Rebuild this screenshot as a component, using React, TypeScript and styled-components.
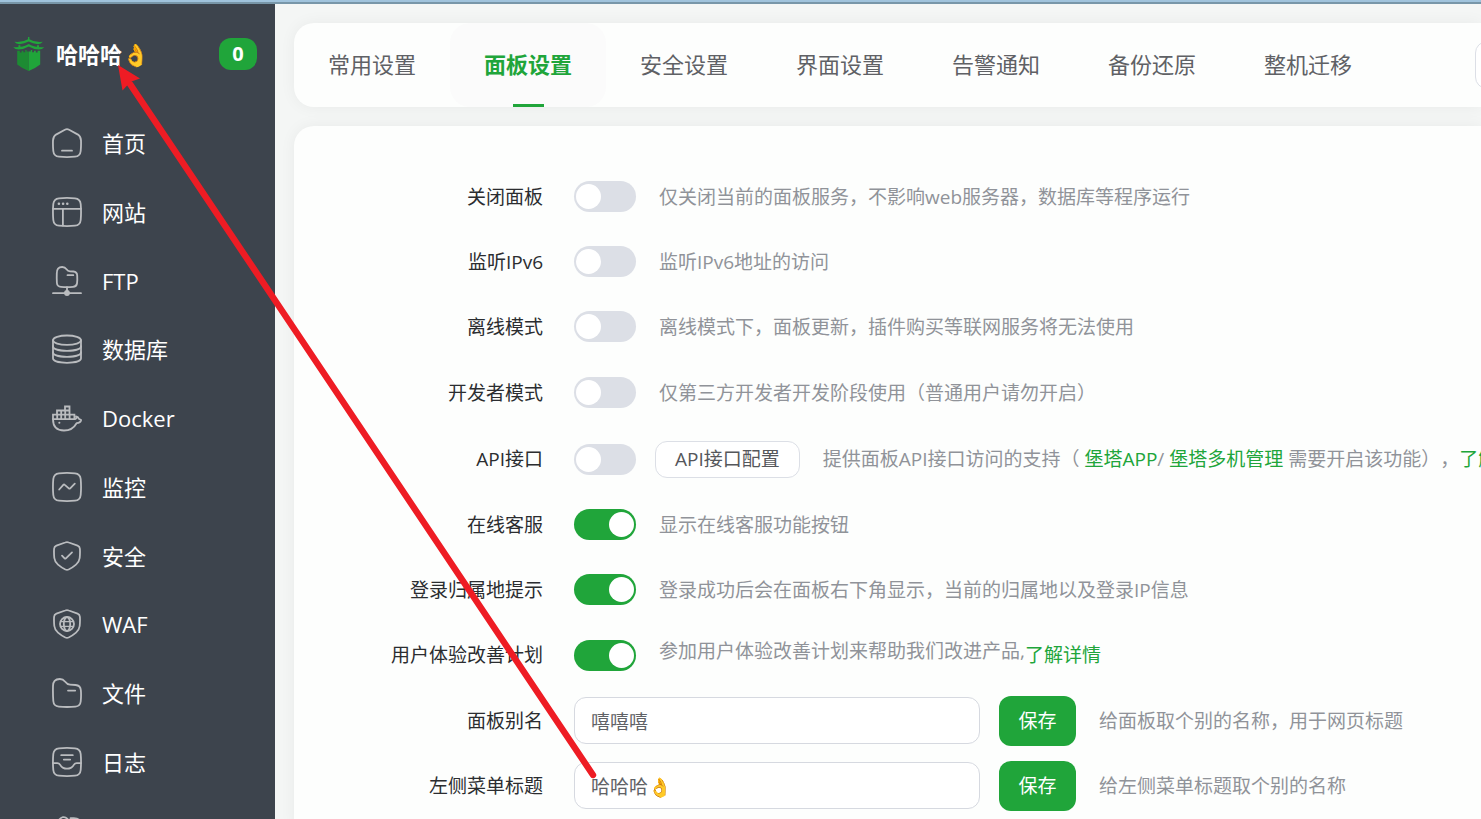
import React, { useState } from 'react';
import styled, { createGlobalStyle } from 'styled-components';

const GREEN = '#20a53a';

const GlobalStyle = createGlobalStyle`
  *, *::before, *::after { box-sizing: border-box; }
  body {
    margin: 0;
    background: #f4f6f5;
    font-family: "Open Sans", "Noto Sans CJK SC", sans-serif;
    text-spacing-trim: space-all;
  }
  button, input { font: inherit; }
  a { text-decoration: none; }
`;

const Page = styled.div`
  position: relative;
  display: flex;
  flex-direction: column;
  height: 100vh;
  overflow: hidden;
`;

const TopStrip = styled.div`
  flex: none;
  height: 4px;
  background: #a0c3dc;
  border-bottom: 2px solid #7896a8;
`;

const Shell = styled.div`
  display: flex;
  flex: 1;
  min-height: 0;
`;

const Sidebar = styled.aside`
  flex: none;
  width: 275px;
  overflow: hidden;
  background: #3d444d;
  color: #fff;
`;

const Brand = styled.header`
  display: flex;
  align-items: center;
  height: 100px;
  padding: 0 18px 0 13px;
`;

const BrandTitle = styled.h1`
  flex: 1;
  margin: 0 0 0 11px;
  font-size: 22px;
  line-height: 32px;
  font-weight: 700;
`;

const Badge = styled.span`
  min-width: 38px;
  height: 32px;
  border-radius: 12px;
  background: ${GREEN};
  font-size: 20px;
  line-height: 32px;
  font-weight: 700;
  text-align: center;
`;

const NavList = styled.ul`
  margin: 0;
  padding: 4px 0 0;
  list-style: none;
`;

const NavItem = styled.li`
  height: 69px;
  &:nth-child(4n) {
    height: 68px;
  }
`;

const NavLink = styled.a`
  display: flex;
  align-items: center;
  gap: 20px;
  height: 100%;
  padding-left: 52px;
  color: #fff;
  font-size: 22px;
  line-height: 32px;
`;

const NavIcon = styled.svg`
  flex: none;
  width: 30px;
  height: 30px;
  fill: none;
  stroke: #babcbf;
  stroke-width: 1.8;
  stroke-linecap: round;
  stroke-linejoin: round;
`;

const Main = styled.main`
  display: flex;
  flex-direction: column;
  flex: 1;
  gap: 19px;
  min-width: 0;
  overflow: hidden;
  padding: 19px 0 0 19px;
`;

const Card = styled.section`
  border-radius: 20px 0 0 20px;
  background: #fdfefd;
  box-shadow: 0 0 16px rgba(0, 0, 0, 0.05);
`;

const TabBar = styled(Card)`
  display: flex;
  flex: none;
  align-items: center;
  height: 84px;
`;

const Tab = styled.button<{ $active: boolean }>`
  display: flex;
  flex: none;
  flex-direction: column;
  align-items: center;
  justify-content: center;
  width: 156px;
  height: 84px;
  padding: 0;
  border: 0;
  border-radius: 20px;
  background: ${p => (p.$active ? '#fbfbfb' : 'transparent')};
  color: ${p => (p.$active ? GREEN : '#5f6165')};
  font-size: 22px;
  line-height: 32px;
  font-weight: ${p => (p.$active ? 700 : 400)};
  &::before {
    content: '';
    height: 25px;
  }
  &::after {
    content: '';
    width: 31px;
    height: 3px;
    margin-top: 24px;
    background: ${p => (p.$active ? GREEN : 'transparent')};
  }
`;

const SearchInput = styled.input`
  flex: none;
  width: 240px;
  height: 48px;
  margin-left: 89px;
  border: 1px solid #dcdfe6;
  border-radius: 12px;
  background: #fff;
`;

const SettingsCard = styled(Card)`
  flex: 1 0 auto;
  padding: 38px 0 20px;
`;

const Row = styled.div<{ $height: number }>`
  display: flex;
  align-items: center;
  height: ${p => p.$height}px;
  font-size: 19px;
  line-height: 28px;
  white-space: nowrap;
`;

const RowLabel = styled.label`
  flex: none;
  width: 249px;
  margin-right: 31px;
  color: #2b2d30;
  text-align: right;
`;

const Switch = styled.input`
  appearance: none;
  flex: none;
  display: flex;
  align-items: center;
  width: 62px;
  height: 31px;
  margin: 0;
  padding: 0 2px;
  border-radius: 16px;
  background: #dcdfe6;
  &::before {
    content: '';
    width: 25px;
    height: 25px;
    border-radius: 50%;
    background: #fff;
  }
  &:checked {
    justify-content: flex-end;
    background: ${GREEN};
  }
`;

const Hint = styled.span<{ $raised?: boolean }>`
  margin-left: 23px;
  padding-bottom: ${p => (p.$raised ? 8 : 0)}px;
  color: #909399;
`;

const GreenLink = styled.a`
  color: ${GREEN};
`;

const OutlineButton = styled.button`
  flex: none;
  height: 37px;
  margin-left: 19px;
  padding: 0 19px;
  border: 1px solid #dcdfe6;
  border-radius: 12px;
  background: #fff;
  color: #55575b;
  line-height: 28px;
`;

const TextField = styled.input`
  flex: none;
  width: 406px;
  height: 47px;
  padding: 0 16px;
  border: 1px solid #d6d9e0;
  border-radius: 12px;
  background: #fff;
  color: #606266;
  line-height: 28px;
`;

const SaveButton = styled.button`
  flex: none;
  width: 77px;
  height: 50px;
  margin-left: 19px;
  padding: 0;
  border: 0;
  border-radius: 12px;
  background: ${GREEN};
  color: #fff;
  line-height: 28px;
`;

const ArrowOverlay = styled.svg`
  position: absolute;
  top: 0;
  left: 0;
  pointer-events: none;
`;

const SQUIRCLE =
  'M7 1.3Q15 .6 23 1.3Q28.2 1.8 28.7 7Q29.4 15 28.7 23Q28.2 28.2 23 28.7Q15 29.4 7 28.7Q1.8 28.2 1.3 23Q.6 15 1.3 7Q1.8 1.8 7 1.3Z';
const SHIELD =
  'M13.2 1.5Q15 .8 16.8 1.5L25.6 4.6Q27.8 5.4 27.9 7.8Q28.2 12 27.7 17Q27.2 21 24 23.6Q20.5 26.6 16.6 28.5Q15 29.2 13.4 28.5Q9.5 26.6 6 23.6Q2.8 21 2.3 17Q1.8 12 2.1 7.8Q2.2 5.4 4.4 4.6Z';

const icons = {
  home: (
    <>
      <path d="M12.9 1.7Q15 .6 17.1 1.7L26 6.6Q28.8 8.4 29 12.4Q29.2 18 28.7 23Q28.2 28.2 23 28.7Q15 29.4 7 28.7Q1.8 28.2 1.3 23Q.8 18 1 12.4Q1.2 8.4 4 6.6Z" />
      <path d="M10 22.7H20" />
    </>
  ),
  site: (
    <>
      <path d={SQUIRCLE} />
      <path d="M1 11.8H29M10.9 11.8V28.6" />
      <path d="M6.8 6.8H7M11 6.8H11.2M15.2 6.8H15.4" strokeWidth="2.4" />
    </>
  ),
  ftp: (
    <>
      <path d="M4.8 7.5Q4.6 1 10.2 1Q13 1 14.5 3.2Q15.8 5.2 18 5.3L21.5 5.5Q25 5.8 25.2 9.5Q25.5 14 25 17.5Q24.5 20.6 21 20.9Q15 21.4 9 20.9Q5.2 20.6 4.9 17Q4.6 12 4.8 7.5Z" />
      <path d="M15.5 9.2H21.3M15 21.2V25M1 27.2H29" />
      <circle cx="15" cy="27" r="2" fill="#babcbf" />
    </>
  ),
  database: (
    <>
      <ellipse cx="15" cy="6.2" rx="14" ry="4.7" />
      <path d="M1 6.2V24.3C1 30.3 29 30.3 29 24.3V6.2" />
      <path d="M1 12.2C1 18.3 29 18.3 29 12.2M1 18.2C1 24.3 29 24.3 29 18.2" />
    </>
  ),
  docker: (
    <>
      <path d="M1 16.2H22.6Q25 16.2 24 13.3Q26.4 13.8 26.8 15.8L29.1 17Q28.5 20 24.6 20.2Q20.5 27.5 12 27.5Q1 27.3 1 16.2Z" />
      <path d="M1 16V11.6H22.4V16M5 11.6V7.5H17.5V11.6M13 7.5V3.5H17.5V7.5M5.2 11.6V16M9.2 7.5V16M13.2 7.5V16M17.6 11.6V16" strokeLinejoin="miter" />
      <path d="M7.3 19.8H7.4" strokeWidth="2" />
    </>
  ),
  monitor: (
    <>
      <path d={SQUIRCLE} />
      <path d="M7.2 17.5L11.3 12.8Q12 12 12.8 12.8L16.8 16.4Q17.5 17 18.2 16.3L22.8 11.6" />
    </>
  ),
  security: (
    <>
      <path d={SHIELD} />
      <path d="M10 14.6L12.6 17.3Q13.2 17.9 13.9 17.3L20 11.4" />
    </>
  ),
  waf: (
    <>
      <path d={SHIELD} />
      <circle cx="15" cy="15" r="7" />
      <ellipse cx="15" cy="15" rx="3.2" ry="7" />
      <path d="M8.6 12.6H21.4M8.6 17.4H21.4" strokeWidth="1.4" />
    </>
  ),
  files: (
    <>
      <path d="M1 8.5Q.8 1 7.8 1Q11 1 13.2 3.8Q15.2 6.6 18 6.7L23.5 7Q28.6 7.4 28.9 12.5Q29.3 18 28.7 23.5Q28.2 28.2 23.5 28.6Q15 29.4 6.8 28.6Q1.7 28.2 1.3 23Q.8 16 1 8.5Z" />
      <path d="M16 12.6H23.2" />
    </>
  ),
  logs: (
    <>
      <path d={SQUIRCLE} />
      <path d="M9.2 8.2H20.8M11.8 12.6H18.2M1 16.2H5.4Q7.4 16.2 8.6 18.4Q10.6 21.6 15 21.6Q19.4 21.6 21.4 18.4Q22.6 16.2 24.6 16.2H29" />
    </>
  ),
  store: (
    <path d="M6 5Q11 -1.6 15.5 3M18.5 2.2H21.5Q29 2 29 9V22Q29 29 22 29H8Q1 29 1 22V14" />
  ),
};

const navItems: { icon: keyof typeof icons; label: string }[] = [
  { icon: 'home', label: '首页' },
  { icon: 'site', label: '网站' },
  { icon: 'ftp', label: 'FTP' },
  { icon: 'database', label: '数据库' },
  { icon: 'docker', label: 'Docker' },
  { icon: 'monitor', label: '监控' },
  { icon: 'security', label: '安全' },
  { icon: 'waf', label: 'WAF' },
  { icon: 'files', label: '文件' },
  { icon: 'logs', label: '日志' },
  { icon: 'store', label: '' },
];

const tabs = ['常用设置', '面板设置', '安全设置', '界面设置', '告警通知', '备份还原', '整机迁移'];

function TowerLogo() {
  return (
    <svg width="32" height="34" viewBox="0 0 32 34" aria-hidden="true">
      <path d="M1.4 4.8Q9.6 5.6 15 2.2V0H16.4V2.2Q21.6 5.6 29.8 4.8Q28.4 7.2 25 7.2Q19.8 7 15.7 4.6Q11.4 7 6.4 7.2Q3 7.2 1.4 4.8Z" fill={GREEN} />
      <path d="M5.4 8.2H7.4V10H5.4ZM24 8.2H26V10H24Z" fill={GREEN} />
      <path d="M.2 10.2Q9 10.8 15.7 7Q22.4 10.8 31.2 10.2Q29.4 12.6 25.8 12.6Q20.4 12.4 15.7 9.6Q11 12.4 5.6 12.6Q2 12.6 .2 10.2Z" fill={GREEN} />
      <path d="M4.2 13.8H6.8V15.6H8.6V13.8H10.4V15.2H12.2V13H13.6V14.4H15.7V34Q8.6 31.2 4.2 27.6Z" fill="#1d8b33" />
      <path d="M27.2 13.8H24.6V15.6H22.8V13.8H21V15.2H19.2V13H17.8V14.4H15.7V34Q22.8 31.2 27.2 27.6Z" fill={GREEN} />
    </svg>
  );
}

function SwitchRow(props: {
  id: string;
  label: string;
  on?: boolean;
  height?: number;
  children: React.ReactNode;
}) {
  const [checked, setChecked] = useState(!!props.on);
  return (
    <Row $height={props.height ?? 65}>
      <RowLabel htmlFor={props.id}>{props.label}</RowLabel>
      <Switch id={props.id} type="checkbox" role="switch" checked={checked} onChange={e => setChecked(e.target.checked)} />
      {props.children}
    </Row>
  );
}

function FieldRow(props: { id: string; label: string; value: string; hint: string }) {
  return (
    <Row $height={65}>
      <RowLabel htmlFor={props.id}>{props.label}</RowLabel>
      <TextField id={props.id} type="text" defaultValue={props.value} />
      <SaveButton type="button">保存</SaveButton>
      <Hint>{props.hint}</Hint>
    </Row>
  );
}

export default function App() {
  const [activeTab, setActiveTab] = useState('面板设置');
  return (
    <Page>
      <GlobalStyle />
      <TopStrip />
      <Shell>
        <Sidebar>
          <Brand>
            <TowerLogo />
            <BrandTitle>哈哈哈👌</BrandTitle>
            <Badge>0</Badge>
          </Brand>
          <nav>
            <NavList>
              {navItems.map(item => (
                <NavItem key={item.icon}>
                  <NavLink href="#">
                    <NavIcon viewBox="0 0 30 30" aria-hidden="true">{icons[item.icon]}</NavIcon>
                    {item.label}
                  </NavLink>
                </NavItem>
              ))}
            </NavList>
          </nav>
        </Sidebar>
        <Main>
          <TabBar>
            {tabs.map(tab => (
              <Tab key={tab} type="button" $active={tab === activeTab} onClick={() => setActiveTab(tab)}>
                {tab}
              </Tab>
            ))}
            <SearchInput type="search" aria-label="搜索" />
          </TabBar>
          <SettingsCard>
            <SwitchRow id="close-panel" label="关闭面板">
              <Hint>仅关闭当前的面板服务，不影响web服务器，数据库等程序运行</Hint>
            </SwitchRow>
            <SwitchRow id="ipv6" label="监听IPv6">
              <Hint>监听IPv6地址的访问</Hint>
            </SwitchRow>
            <SwitchRow id="offline" label="离线模式">
              <Hint>离线模式下，面板更新，插件购买等联网服务将无法使用</Hint>
            </SwitchRow>
            <SwitchRow id="developer" label="开发者模式" height={67}>
              <Hint>仅第三方开发者开发阶段使用（普通用户请勿开启）</Hint>
            </SwitchRow>
            <SwitchRow id="api" label="API接口" height={66}>
              <OutlineButton type="button">API接口配置</OutlineButton>
              <Hint>
                提供面板API接口访问的支持（ <GreenLink href="#">堡塔APP</GreenLink>/{' '}
                <GreenLink href="#">堡塔多机管理</GreenLink> 需要开启该功能），<GreenLink href="#">了解详情</GreenLink>
              </Hint>
            </SwitchRow>
            <SwitchRow id="service" label="在线客服" on>
              <Hint>显示在线客服功能按钮</Hint>
            </SwitchRow>
            <SwitchRow id="login-place" label="登录归属地提示" on>
              <Hint>登录成功后会在面板右下角显示，当前的归属地以及登录IP信息</Hint>
            </SwitchRow>
            <SwitchRow id="experience" label="用户体验改善计划" height={66} on>
              <Hint $raised>参加用户体验改善计划来帮助我们改进产品,</Hint>
              <GreenLink href="#">了解详情</GreenLink>
            </SwitchRow>
            <FieldRow id="alias" label="面板别名" value="嘻嘻嘻" hint="给面板取个别的名称，用于网页标题" />
            <FieldRow id="menu-title" label="左侧菜单标题" value="哈哈哈👌" hint="给左侧菜单标题取个别的名称" />
          </SettingsCard>
        </Main>
      </Shell>
      <ArrowOverlay width="620" height="800" viewBox="0 0 620 800" aria-hidden="true">
        <path d="M593 775L130 84" stroke="#ee1c24" strokeWidth="6.4" strokeLinecap="round" />
        <path d="M118 65L140 78.5L131.5 81.5L128 84.5L122.5 90.5Z" fill="#ee1c24" />
      </ArrowOverlay>
    </Page>
  );
}
